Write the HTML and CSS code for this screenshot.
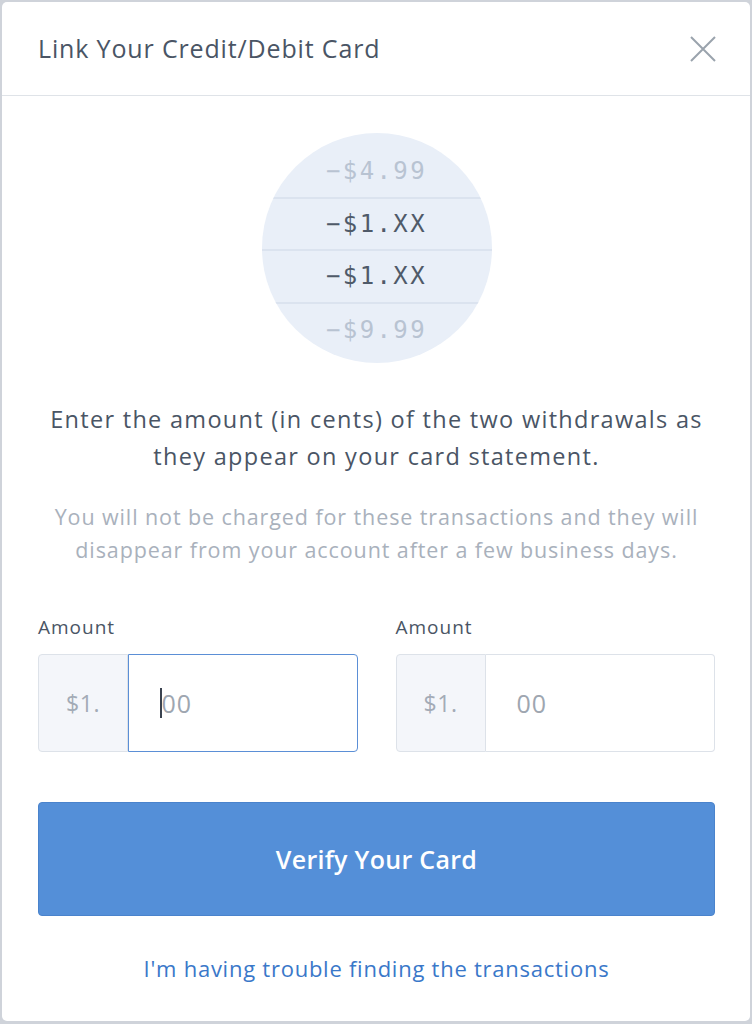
FILE: index.html
```html
<!DOCTYPE html>
<html lang="en">
<head>
<meta charset="utf-8">
<title>Link Your Credit/Debit Card</title>
<link rel="stylesheet" href="styles.css">
</head>
<body>
<div class="modal">
  <header class="modal-header">
    <h1 class="title">Link Your Credit/Debit Card</h1>
    <button class="close" aria-label="Close">
      <svg width="26" height="26" viewBox="0 0 26 26"><path d="M1 1 L25 25 M25 1 L1 25" stroke="#9aa3ad" stroke-width="2" fill="none"/></svg>
    </button>
  </header>
  <main class="modal-body">
    <div class="statement">
      <div class="row faded">−$4.99</div>
      <div class="row">−$1.XX</div>
      <div class="row">−$1.XX</div>
      <div class="row faded">−$9.99</div>
    </div>
    <p class="lead">Enter the amount (in cents) of the two withdrawals as they appear on your card statement.</p>
    <p class="note">You will not be charged for these transactions and they will disappear from your account after a few business days.</p>
    <div class="fields">
      <label class="field">
        <span class="label">Amount</span>
        <span class="input-group focused">
          <span class="prefix">$1.</span>
          <span class="input"><span class="caret"></span>00</span>
        </span>
      </label>
      <label class="field">
        <span class="label">Amount</span>
        <span class="input-group">
          <span class="prefix">$1.</span>
          <span class="input">00</span>
        </span>
      </label>
    </div>
    <button class="verify">Verify Your Card</button>
    <a class="trouble" href="#">I'm having trouble finding the transactions</a>
  </main>
</div>
</body>
</html>
```
FILE: styles.css
```css
* { box-sizing: border-box; }
html, body { margin: 0; padding: 0; }
body {
  width: 752px;
  height: 1024px;
  background: #cfd3da;
  padding: 2px 2px 3px 2px;
  font-family: "Open Sans", Lato, sans-serif;
  overflow: hidden;
}
.modal {
  background: #fff;
  border-radius: 5px;
  height: 100%;
  display: flex;
  flex-direction: column;
}
.modal-header {
  height: 94px;
  border-bottom: 1px solid #dfe3e8;
  display: flex;
  align-items: center;
  justify-content: space-between;
  padding: 0 34px 0 36px;
}
.title {
  margin: 0;
  font-size: 25px;
  letter-spacing: 0.85px;
  font-weight: 400;
  color: #4a5565;
  padding-bottom: 2px;
}
.close {
  border: 0;
  background: none;
  padding: 0;
  width: 26px;
  height: 26px;
  display: flex;
}
.modal-body {
  padding: 37px 35px 0 36px;
  display: flex;
  flex-direction: column;
  align-items: center;
}
.statement {
  width: 230px;
  height: 230px;
  border-radius: 50%;
  background: #e9eff8;
  overflow: hidden;
  display: flex;
  flex-direction: column;
  padding-top: 13px;
}
.row {
  height: 52.5px;
  flex: none;
  display: flex;
  align-items: center;
  justify-content: center;
  font-family: "DejaVu Sans Mono", monospace;
  font-size: 24px;
  letter-spacing: 2.4px;
  color: #4f5a69;
  border-bottom: 2px solid #dbe3ef;
}
.row:last-child { border-bottom: 0; }
.row.faded { color: #b8c3d2; }
.lead {
  margin: 38px 0 0;
  max-width: 680px;
  text-align: center;
  font-size: 23.5px;
  letter-spacing: 1.3px;
  line-height: 37px;
  color: #4a5565;
}
.note {
  margin: 25px 0 0;
  max-width: 680px;
  text-align: center;
  font-size: 21.5px;
  letter-spacing: 0.9px;
  line-height: 33px;
  color: #a9b1bc;
}
.fields {
  align-self: stretch;
  display: grid;
  grid-template-columns: 1fr 1fr;
  gap: 38px;
  margin-top: 50px;
}
.field { display: flex; flex-direction: column; }
.label {
  font-size: 19px;
  letter-spacing: 1px;
  color: #4a5565;
  line-height: 22px;
  margin-bottom: 16px;
}
.input-group {
  display: flex;
  height: 98px;
}
.prefix {
  width: 90px;
  flex: none;
  background: #f4f6fa;
  border: 1px solid #dde2e9;
  border-radius: 4px 0 0 4px;
  display: flex;
  align-items: center;
  justify-content: center;
  font-size: 23px;
  letter-spacing: 0.5px;
  color: #a3abb6;
}
.input {
  flex: 1;
  display: flex;
  align-items: center;
  padding-left: 31px;
  font-size: 25px;
  letter-spacing: 1px;
  color: #9ea6b0;
  border: 1px solid #dde2e9;
  border-left: 0;
  border-radius: 0 4px 4px 0;
}
.focused .input {
  border: 1.5px solid #5b8fd6;
}
.caret {
  display: inline-block;
  width: 1.5px;
  height: 30px;
  background: #3b4350;
}
.verify {
  align-self: stretch;
  margin-top: 50px;
  height: 114px;
  border: 1px solid #4a83cc;
  border-radius: 4px;
  background: #548fd8;
  color: #fff;
  font-family: "Open Sans", Lato, sans-serif;
  font-size: 25px;
  letter-spacing: 0.3px;
  font-weight: 600;
}
.trouble {
  margin-top: 37px;
  font-size: 22px;
  letter-spacing: 0.75px;
  color: #3a78c9;
  text-decoration: none;
}
```
